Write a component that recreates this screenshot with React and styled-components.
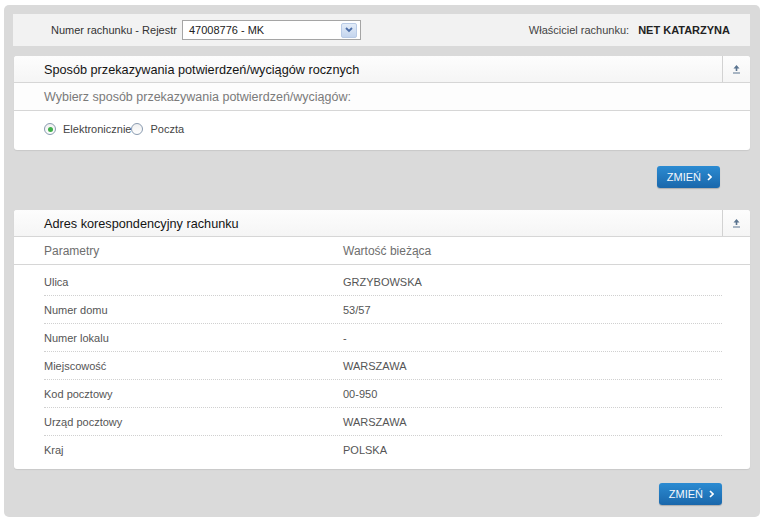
import React from "react";
import styled, { createGlobalStyle } from "styled-components";

const Global = createGlobalStyle`
  html, body { margin: 0; padding: 0; background: #fff; }
  body { font-family: "Liberation Sans", Arial, sans-serif; font-size: 11px; color: #333; }
  * { box-sizing: border-box; }
`;

const Page = styled.div`
  padding: 5px 5px 4px 4px;
  width: 765px;
`;

const Frame = styled.div`
  background: #dadada;
  border-radius: 5px;
  padding: 9px 10px 12px 9px;
  display: flex;
  flex-direction: column;
`;

const TopBar = styled.div`
  height: 32px;
  background: #f2f2f2;
  display: flex;
  align-items: center;
  padding: 0 20px 0 38px;
  font-size: 11px;
  color: #333;
`;

const TopLabel = styled.span`
  margin-right: 5px;
`;

const Select = styled.div`
  width: 179px;
  height: 20px;
  border: 1px solid #a5a5a5;
  background: #fff;
  display: flex;
  align-items: center;
  padding: 0 3px 0 6px;
  font-size: 11px;
  color: #222;
`;

const SelectText = styled.span`
  flex: 1;
`;

const SelectArrow = styled.span`
  width: 16px;
  height: 15px;
  border-radius: 2px;
  background: linear-gradient(#e3ecf8, #c4d5ee);
  border: 1px solid #b9cbe6;
  display: flex;
  align-items: center;
  justify-content: center;
`;

const Owner = styled.div`
  margin-left: auto;
  display: flex;
  align-items: center;
  gap: 9px;
  color: #444;
`;

const OwnerName = styled.span`
  font-weight: bold;
  color: #222;
`;

const Panel = styled.div`
  margin: ${(p) => p.$top}px 0 0 1px;
  background: #fff;
  border-radius: 3px;
  box-shadow: 0 1px 1px rgba(0, 0, 0, 0.08);
  overflow: hidden;
`;

const PanelHeader = styled.div`
  height: 27px;
  display: flex;
  align-items: stretch;
  background: linear-gradient(#fdfdfd, #f5f5f5);
  border-bottom: 1px solid #d6d6d6;
`;

const PanelTitle = styled.div`
  flex: 1;
  display: flex;
  align-items: center;
  padding-left: 30px;
  padding-top: 1px;
  font-size: 12.7px;
  color: #141414;
`;

const Collapse = styled.div`
  width: 28px;
  border-left: 1px solid #d2d2d2;
  display: flex;
  align-items: center;
  justify-content: center;
`;

const SubRow = styled.div`
  height: 28px;
  display: flex;
  align-items: center;
  padding-left: 30px;
  font-size: 12.5px;
  color: #7a7a7a;
  background: #fdfdfd;
  border-bottom: 1px solid #d6d6d6;
`;

const RadioRow = styled.div`
  height: 39px;
  display: flex;
  align-items: center;
  padding-left: 30px;
  padding-bottom: 3px;
  font-size: 11px;
  color: #444;
`;

const RadioCircle = styled.span`
  width: 12px;
  height: 12px;
  border-radius: 50%;
  border: 1px solid #8a9bb0;
  background: linear-gradient(#f0f0f0, #fff);
  display: inline-flex;
  align-items: center;
  justify-content: center;
  margin-right: ${(p) => p.$gap}px;
  &::after {
    content: "";
    width: 5px;
    height: 5px;
    border-radius: 50%;
    background: ${(p) => (p.$on ? "#3fae49" : "transparent")};
  }
`;

const RadioLabel = styled.span``;

const ButtonRow = styled.div`
  display: flex;
  justify-content: flex-end;
  padding: ${(p) => p.$pad};
`;

const Button = styled.div`
  height: 22px;
  padding: 0 8px 0 10px;
  border-radius: 3px;
  background: linear-gradient(#2b8bd2, #1a67ab);
  box-shadow: 0 1px 1px rgba(0, 0, 0, 0.2);
  color: #f4f8fc;
  font-size: 11px;
  display: flex;
  align-items: center;
  gap: 6px;
`;

const ColHead = styled.div`
  height: 28px;
  display: grid;
  grid-template-columns: 299px 1fr;
  align-items: center;
  padding-left: 30px;
  font-size: 12px;
  color: #6e6e6e;
  border-bottom: 1px solid #d6d6d6;
`;

const Rows = styled.div`
  padding: 3px 28px 5px 30px;
`;

const Row = styled.div`
  height: 28px;
  display: grid;
  grid-template-columns: 299px 1fr;
  align-items: center;
  font-size: 11px;
  color: #555;
  border-bottom: ${(p) => (p.$last ? "none" : "1px dotted #d0d0d0")};
`;

const UpIcon = () => (
  <svg width="9" height="10" viewBox="0 0 9 10">
    <path d="M4.5 1 L7.5 4.5 H5.3 V7 H3.7 V4.5 H1.5 Z" fill="#5a7490" />
    <rect x="1" y="8.5" width="7" height="1" fill="#5a7490" />
  </svg>
);

const Chevron = () => (
  <svg width="5" height="8" viewBox="0 0 5 8">
    <path d="M1 1 L4 4 L1 7" stroke="#fff" strokeWidth="1.6" fill="none" />
  </svg>
);

const rows = [
  ["Ulica", "GRZYBOWSKA"],
  ["Numer domu", "53/57"],
  ["Numer lokalu", "-"],
  ["Miejscowość", "WARSZAWA"],
  ["Kod pocztowy", "00-950"],
  ["Urząd pocztowy", "WARSZAWA"],
  ["Kraj", "POLSKA"],
];

export default function App() {
  return (
    <Page>
      <Global />
      <Frame>
        <TopBar>
          <TopLabel>Numer rachunku - Rejestr</TopLabel>
          <Select>
            <SelectText>47008776 - MK</SelectText>
            <SelectArrow>
              <svg width="8" height="6" viewBox="0 0 8 6">
                <path d="M1 1 L4 4 L7 1" stroke="#4d6fa8" strokeWidth="1.8" fill="none" />
              </svg>
            </SelectArrow>
          </Select>
          <Owner>
            <span>Właściciel rachunku:</span>
            <OwnerName>NET KATARZYNA</OwnerName>
          </Owner>
        </TopBar>

        <Panel $top={10}>
          <PanelHeader>
            <PanelTitle>Sposób przekazywania potwierdzeń/wyciągów rocznych</PanelTitle>
            <Collapse><UpIcon /></Collapse>
          </PanelHeader>
          <SubRow>Wybierz sposób przekazywania potwierdzeń/wyciągów:</SubRow>
          <RadioRow>
            <RadioCircle $on $gap={7} />
            <RadioLabel>Elektronicznie</RadioLabel>
            <RadioCircle $gap={7} />
            <RadioLabel>Poczta</RadioLabel>
          </RadioRow>
        </Panel>

        <ButtonRow $pad="16px 30px 22px 0">
          <Button>ZMIEŃ <Chevron /></Button>
        </ButtonRow>

        <Panel $top={0}>
          <PanelHeader>
            <PanelTitle>Adres korespondencyjny rachunku</PanelTitle>
            <Collapse><UpIcon /></Collapse>
          </PanelHeader>
          <ColHead>
            <span>Parametry</span>
            <span>Wartość bieżąca</span>
          </ColHead>
          <Rows>
            {rows.map(([k, v], i) => (
              <Row key={k} $last={i === rows.length - 1}>
                <span>{k}</span>
                <span>{v}</span>
              </Row>
            ))}
          </Rows>
        </Panel>

        <ButtonRow $pad="14px 28px 0 0">
          <Button>ZMIEŃ <Chevron /></Button>
        </ButtonRow>
      </Frame>
    </Page>
  );
}
